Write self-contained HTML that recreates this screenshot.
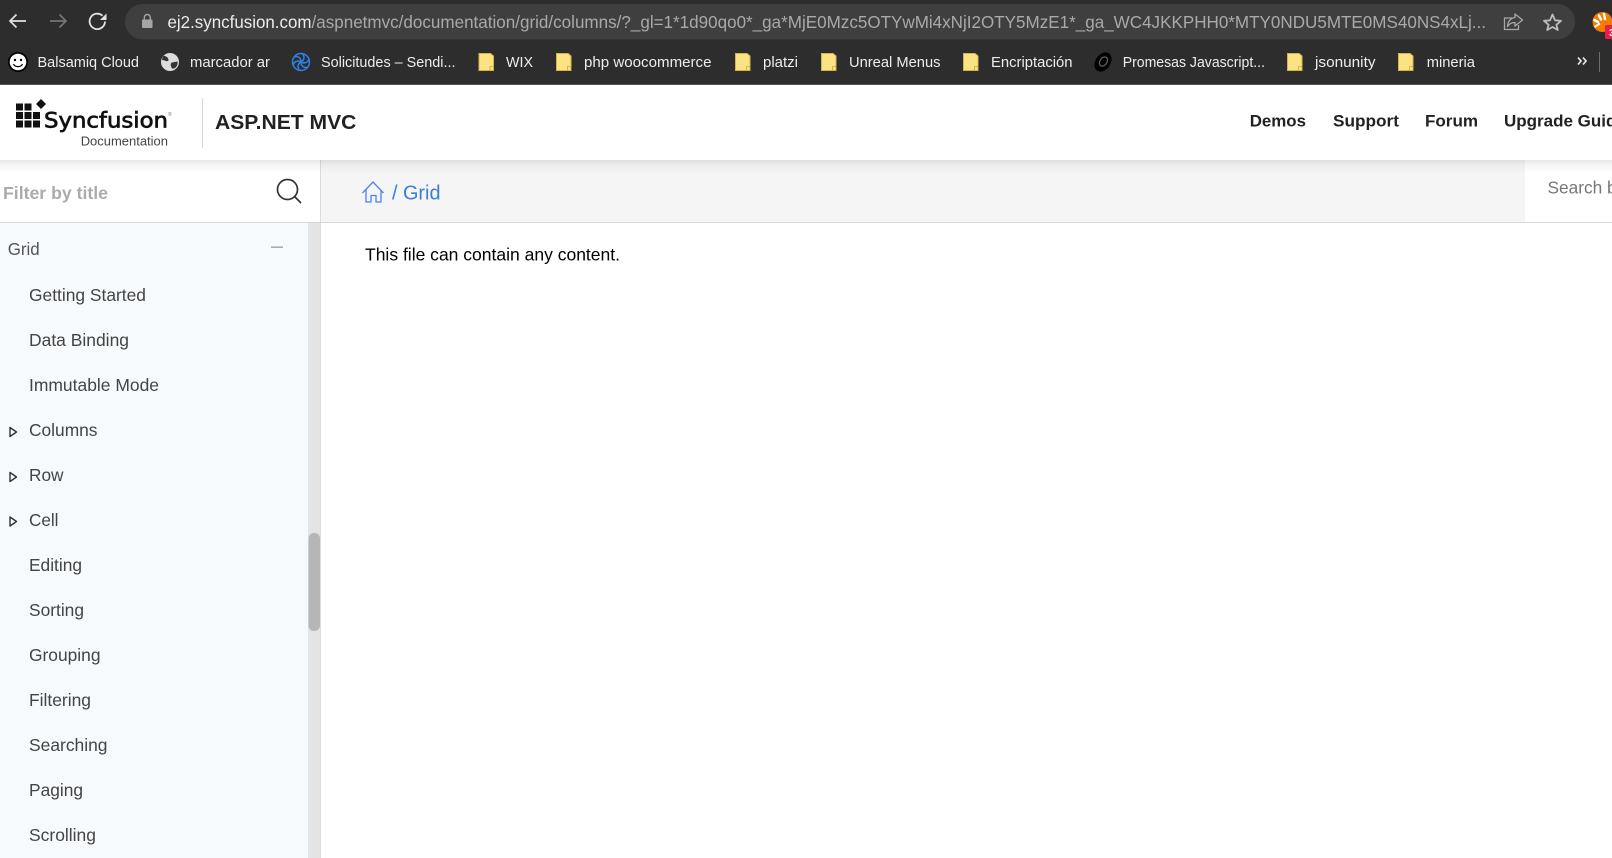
<!DOCTYPE html>
<html><head><meta charset="utf-8"><title>Grid</title>
<style>
html,body{margin:0;padding:0;width:1612px;height:858px;overflow:hidden;background:#fff}
svg{display:block}
text{font-family:"Liberation Sans",sans-serif;white-space:pre}
.bm{font-size:15px;fill:#ededed}
.nav{font-size:17px;font-weight:bold;fill:#222}
.li{font-size:17.3px;fill:#444}
</style></head><body>
<svg width="1612" height="858" viewBox="0 0 1612 858" xmlns="http://www.w3.org/2000/svg">
<defs>
<linearGradient id="sh" x1="0" y1="0" x2="0" y2="1"><stop offset="0" stop-color="#000" stop-opacity=".09"/><stop offset=".4" stop-color="#000" stop-opacity=".035"/><stop offset="1" stop-color="#000" stop-opacity="0"/></linearGradient>
<g id="folder"><path d="M.5 .5H12L15 3V17.5H.5Z" fill="#fbe283" stroke="#d3b54e"/><path d="M11.5 17.5V13.500H15V17.500Z" fill="#fbe283" stroke="#c9a93f" stroke-width=".8"/></g>
<path id="tri" d="M1 1L7.5 5.5L1 10Z" fill="none" stroke="#333" stroke-width="1.4" stroke-linejoin="round"/>
<path id="blade" d="M0 0C3.500 -1.500 4 -6 1 -8.500" fill="none" stroke="#2f80e8" stroke-width="1.500"/>
</defs>

<!-- browser chrome -->
<rect width="1612" height="85" fill="#2d2d2d"/>
<rect x="125" y="4" width="1450" height="35.500" rx="17.700" fill="#3f3f3f"/>
<path d="M26 21H10M16.500 14.500L10 21L16.500 27.500" fill="none" stroke="#e0e0e0" stroke-width="1.700"/>
<path d="M66 21H50M59.500 14.500L66 21L59.500 27.500" fill="none" stroke="#757575" stroke-width="1.700"/>
<path d="M105 21.500A7.700 7.700 0 1 1 102.500 15.700" fill="none" stroke="#e2e2e2" stroke-width="1.800"/>
<path d="M106.500 13.500V20H100Z" fill="#e2e2e2"/>
<rect x="142" y="19.500" width="10.500" height="8.500" rx="1" fill="#a5a5a5"/>
<path d="M144.300 19.500V17.500A3 3 0 0 1 150.300 17.500V19.500" fill="none" stroke="#a5a5a5" stroke-width="1.400"/>
<text x="167.500" y="28" font-size="17.300" fill="#ececec" textLength="144" lengthAdjust="spacingAndGlyphs">ej2.syncfusion.com</text>
<text x="311.500" y="28" font-size="17.300" fill="#a9a9a9" textLength="1174.500" lengthAdjust="spacingAndGlyphs">/aspnetmvc/documentation/grid/columns/?_gl=1*1d90qo0*_ga*MjE0Mzc5OTYwMi4xNjI2OTY5MzE1*_ga_WC4JKKPHH0*MTY0NDU5MTE0MS40NS4xLj...</text>
<path d="M1512 18H1504.500V29.500H1518.500V25" fill="none" stroke="#a8a8a8" stroke-width="1.300"/>
<path d="M1515 14L1522.500 20L1515 26V22.500C1511 22.500 1509 24 1507.500 26.500C1507.800 21.500 1510.500 18 1515 17.500Z" fill="none" stroke="#a8a8a8" stroke-width="1.300" stroke-linejoin="round"/>
<path d="M1552.500 14.500L1555 20.300L1561 20.800L1556.400 24.800L1557.800 30L1552.500 27L1547.200 30L1548.600 24.800L1544 20.800L1550 20.300Z" fill="none" stroke="#bdbdbd" stroke-width="1.800" stroke-linejoin="round"/>
<circle cx="1602.500" cy="22" r="10" fill="#f57c00"/>
<path d="M1598 22L1594.500 20M1601 19.500L1599 15.500M1605 19L1604 14" stroke="#fff" stroke-width="2.500" stroke-linecap="round"/>
<path d="M1594.500 27L1600 23.500" stroke="#fff" stroke-width="2"/>
<rect x="1605" y="25" width="8" height="14" rx="1.500" fill="#e51f50"/>
<text x="1609" y="36" font-size="10" font-weight="bold" fill="#fff">3</text>

<!-- bookmarks -->
<circle cx="18" cy="62" r="10" fill="#000"/><circle cx="18" cy="62" r="8.300" fill="#fff"/>
<circle cx="15" cy="60" r="1.200" fill="#000"/><circle cx="21" cy="60" r="1.200" fill="#000"/>
<path d="M13.500 64C15 67.500 21 67.500 22.500 64" fill="none" stroke="#000" stroke-width="1.200"/>
<text class="bm" x="37.500" y="67" textLength="101.500" lengthAdjust="spacingAndGlyphs">Balsamiq Cloud</text>
<circle cx="170" cy="62" r="9" fill="#dcdcdc"/>
<path d="M163.500 55.800C166 56 168 57.500 168.500 59.500C169 61.500 166 61.500 165 60.500L162 60C162.200 58.300 162.700 56.800 163.500 55.800ZM172 62.500L177.500 61.500C178 64 177 66.500 175 68L172.500 68.800C170.800 67 169.800 63.500 172 62.500Z" fill="#333"/>
<text class="bm" x="190" y="67" textLength="80" lengthAdjust="spacingAndGlyphs">marcador ar</text>
<g transform="translate(301 62)">
<circle r="8.500" fill="none" stroke="#2f80e8" stroke-width="1.500"/>
<use href="#blade"/><use href="#blade" transform="rotate(60)"/><use href="#blade" transform="rotate(120)"/><use href="#blade" transform="rotate(180)"/><use href="#blade" transform="rotate(240)"/><use href="#blade" transform="rotate(300)"/>
</g>
<text class="bm" x="321" y="67" textLength="134.500" lengthAdjust="spacingAndGlyphs">Solicitudes – Sendi...</text>
<use href="#folder" x="478.500" y="53"/>
<text class="bm" x="506" y="67" textLength="27" lengthAdjust="spacingAndGlyphs">WIX</text>
<use href="#folder" x="556" y="53"/>
<text class="bm" x="584" y="67" textLength="127.500" lengthAdjust="spacingAndGlyphs">php woocommerce</text>
<use href="#folder" x="735" y="53"/>
<text class="bm" x="763" y="67" textLength="35" lengthAdjust="spacingAndGlyphs">platzi</text>
<use href="#folder" x="821" y="53"/>
<text class="bm" x="849" y="67" textLength="91.500" lengthAdjust="spacingAndGlyphs">Unreal Menus</text>
<use href="#folder" x="963" y="53"/>
<text class="bm" x="991" y="67" textLength="81.500" lengthAdjust="spacingAndGlyphs">Encriptación</text>
<ellipse cx="1103" cy="62" rx="7.500" ry="10.500" transform="rotate(35 1103 62)" fill="#000"/>
<ellipse cx="1103.500" cy="61.500" rx="3.500" ry="5" transform="rotate(35 1103.500 61.500)" fill="none" stroke="#666" stroke-width="1.200"/>
<text class="bm" x="1122.700" y="67" textLength="142.300" lengthAdjust="spacingAndGlyphs">Promesas Javascript...</text>
<use href="#folder" x="1287" y="53"/>
<text class="bm" x="1315" y="67" textLength="60.500" lengthAdjust="spacingAndGlyphs">jsonunity</text>
<use href="#folder" x="1398" y="53"/>
<text class="bm" x="1426.700" y="67" textLength="48.300" lengthAdjust="spacingAndGlyphs">mineria</text>
<path d="M1578 57.500L1581 61L1578 64.500M1583 57.500L1586 61L1583 64.500" fill="none" stroke="#e8e8e8" stroke-width="1.700"/>
<rect x="1599" y="52" width="1" height="20" fill="#6d6d6d"/>
<rect y="84" width="1612" height="1" fill="#555"/>

<!-- site header -->
<rect y="85" width="1612" height="75" fill="#fff"/>
<g fill="#111">
<rect x="16" y="103.500" width="7" height="7"/><rect x="24.500" y="103.500" width="7" height="7"/>
<rect x="16" y="112" width="7" height="7"/><rect x="24.500" y="112" width="7" height="7"/><rect x="33" y="112" width="7" height="7"/>
<rect x="16" y="120.500" width="7" height="7"/><rect x="24.500" y="120.500" width="7" height="7"/><rect x="33" y="120.500" width="7" height="7"/>
<path d="M41 99L46 104L41 109L36 104Z"/>
</g>
<text x="44" y="127.700" font-size="21" fill="#111" textLength="124" lengthAdjust="spacingAndGlyphs" style="font-family:'DejaVu Sans',sans-serif;stroke:#111;stroke-width:.7">Syncfusion</text>
<text x="168" y="116" font-size="5" fill="#777">®</text>
<text x="80.700" y="145.700" font-size="13" fill="#444" textLength="87.300" lengthAdjust="spacingAndGlyphs">Documentation</text>
<rect x="202" y="98" width="1" height="50" fill="#d8d8d8"/>
<text x="215" y="129" font-size="20.500" font-weight="bold" fill="#222" textLength="141.400" lengthAdjust="spacingAndGlyphs">ASP.NET MVC</text>
<text class="nav" x="1249.700" y="126.700" textLength="56.300" lengthAdjust="spacingAndGlyphs">Demos</text>
<text class="nav" x="1333" y="126.700" textLength="66" lengthAdjust="spacingAndGlyphs">Support</text>
<text class="nav" x="1425" y="126.700" textLength="53" lengthAdjust="spacingAndGlyphs">Forum</text>
<text class="nav" x="1504" y="126.700">Upgrade Guide</text>

<!-- filter + breadcrumb -->
<rect x="321" y="160" width="1204" height="62" fill="#f5f5f5"/>
<rect x="320" y="160" width="1" height="698" fill="#dcdcdc"/>
<rect y="222" width="1612" height="1" fill="#d8d8d8"/>
<text x="3" y="199" font-size="17.300" font-weight="bold" fill="#ababab" textLength="105" lengthAdjust="spacingAndGlyphs">Filter by title</text>
<circle cx="287.500" cy="189.500" r="10" fill="none" stroke="#333" stroke-width="1.700"/>
<path d="M294.500 196.500L301 203" stroke="#333" stroke-width="1.700"/>
<path d="M362.500 193L373 182L383.500 193M366 190V202H371V195.500H376V202H381V190" fill="none" stroke="#4d82ee" stroke-width="1.300" stroke-linejoin="round"/>
<text x="392" y="199.300" font-size="20" fill="#3b7dd8">/</text>
<text x="403" y="199.300" font-size="20" fill="#3b7dd8" textLength="37.500" lengthAdjust="spacingAndGlyphs">Grid</text>
<text x="1547.500" y="193.700" font-size="17.300" fill="#777">Search by</text>

<!-- sidebar -->
<rect y="223" width="308" height="635" fill="#f7fafd"/>
<rect x="308" y="223" width="12" height="635" fill="#e4e4e4"/>
<rect x="308.500" y="533" width="11.500" height="98" rx="5.500" fill="#b6b6b6"/>
<text x="7.700" y="255" font-size="17.300" fill="#555" textLength="32" lengthAdjust="spacingAndGlyphs">Grid</text>
<rect x="271" y="246.500" width="12" height="1.300" fill="#9a9a9a"/>
<text class="li" x="29" y="301" textLength="117" lengthAdjust="spacingAndGlyphs">Getting Started</text>
<text class="li" x="29" y="346" textLength="100" lengthAdjust="spacingAndGlyphs">Data Binding</text>
<text class="li" x="29" y="391" textLength="130" lengthAdjust="spacingAndGlyphs">Immutable Mode</text>
<use href="#tri" x="9" y="426.500"/>
<text class="li" x="29" y="436" textLength="68.500" lengthAdjust="spacingAndGlyphs">Columns</text>
<use href="#tri" x="9" y="471.500"/>
<text class="li" x="29" y="481" textLength="34.500" lengthAdjust="spacingAndGlyphs">Row</text>
<use href="#tri" x="9" y="516"/>
<text class="li" x="29" y="525.800" textLength="29.500" lengthAdjust="spacingAndGlyphs">Cell</text>
<text class="li" x="29" y="571" textLength="53" lengthAdjust="spacingAndGlyphs">Editing</text>
<text class="li" x="29" y="616" textLength="55" lengthAdjust="spacingAndGlyphs">Sorting</text>
<text class="li" x="29" y="661" textLength="71.500" lengthAdjust="spacingAndGlyphs">Grouping</text>
<text class="li" x="29" y="705.800" textLength="62" lengthAdjust="spacingAndGlyphs">Filtering</text>
<text class="li" x="29" y="751" textLength="78.500" lengthAdjust="spacingAndGlyphs">Searching</text>
<text class="li" x="29" y="796" textLength="54" lengthAdjust="spacingAndGlyphs">Paging</text>
<text class="li" x="29" y="841" textLength="67" lengthAdjust="spacingAndGlyphs">Scrolling</text>

<!-- content -->
<text x="365" y="260.700" font-size="17.300" fill="#000" textLength="255" lengthAdjust="spacingAndGlyphs">This file can contain any content.</text>

<!-- header shadow -->
<rect y="160" width="1612" height="14" fill="url(#sh)"/>
</svg>
</body></html>
